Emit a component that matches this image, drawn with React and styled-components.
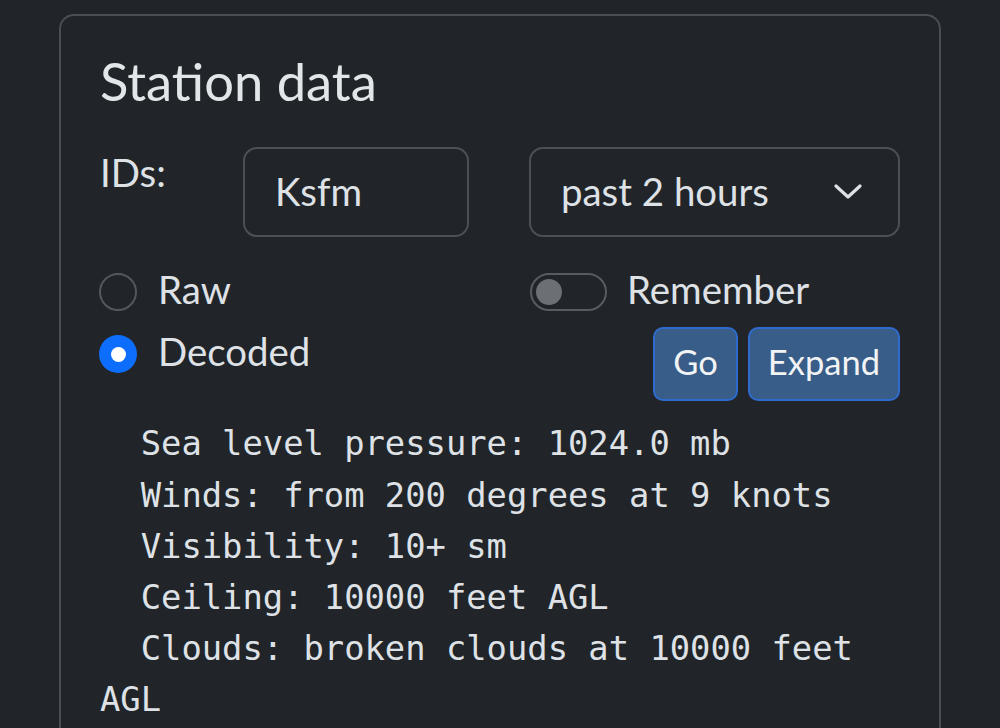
import React from "react";
import styled, { createGlobalStyle } from "styled-components";

const Global = createGlobalStyle`
  html, body { margin: 0; padding: 0; background: #212529; }
  body {
    font-family: Lato, "Noto Sans", sans-serif;
    color: #dee2e6;
    font-size: 38.4px;
    line-height: 1.5;
  }
  * { box-sizing: border-box; }
`;

const Card = styled.section`
  margin: 14px 59px 0 59px;
  border: 2px solid #4a4f55;
  border-radius: 15px;
  padding: 32px 39px 40px 39px;
  min-height: 760px;
`;

const Title = styled.h4`
  margin: 0 0 33px 0;
  font-size: 52.5px;
  font-weight: 400;
  line-height: 66px;
  color: #e3e6e9;
`;

const FieldRow = styled.div`
  display: grid;
  grid-template-columns: 143px 226px 1fr;
  align-items: start;
`;

const Label = styled.label`
  margin-top: -3px;
  line-height: 57.6px;
`;

const Field = styled.div`
  height: 90px;
  border: 2px solid #4b5057;
  border-radius: 14px;
  padding: 0 36px 0 30px;
  display: flex;
  align-items: center;
  justify-content: space-between;
  line-height: 57.6px;
  margin-left: ${(p) => (p.$gap ? "60px" : "0")};
`;

const Options = styled.div`
  margin-top: 24px;
  display: grid;
  grid-template-columns: 1fr 370px;
  align-items: start;
`;

const Stack = styled.div`
  display: flex;
  flex-direction: column;
`;

const Check = styled.div`
  display: flex;
  align-items: flex-start;
  line-height: 57.6px;
  margin-bottom: 4.8px;
  gap: ${(p) => (p.$switch ? "20px" : "21px")};
`;

const Radio = styled.span`
  flex: 0 0 38px;
  width: 38px;
  height: 38px;
  margin-top: 12px;
  margin-left: -1px;
  border-radius: 50%;
  border: ${(p) => (p.$checked ? "none" : "2px solid #53585e")};
  background: ${(p) => (p.$checked ? "#0d6efd" : "transparent")};
  display: flex;
  align-items: center;
  justify-content: center;
  &::after {
    content: "";
    display: ${(p) => (p.$checked ? "block" : "none")};
    width: 15px;
    height: 15px;
    border-radius: 50%;
    background: #fff;
  }
`;

const Switch = styled.span`
  flex: 0 0 77px;
  width: 77px;
  height: 38px;
  margin-top: 12px;
  border: 2px solid #575c62;
  border-radius: 19px;
  display: flex;
  align-items: center;
  padding-left: 4px;
  &::after {
    content: "";
    width: 26px;
    height: 26px;
    border-radius: 50%;
    background: #6c7075;
  }
`;

const Buttons = styled.div`
  display: flex;
  justify-content: flex-end;
  gap: 10px;
  margin-top: 4px;
`;

const Button = styled.button`
  font-family: Lato, "Noto Sans", sans-serif;
  font-size: 34.5px;
  line-height: 51px;
  color: #f1f3f5;
  background: #385d88;
  border: 2px solid #2e6bcc;
  border-radius: 10px;
  padding: 7px 18px 12px 18px;
  cursor: pointer;
`;

const Pre = styled.pre`
  margin: 17px 0 0 0;
  font-family: "DejaVu Sans Mono", "Liberation Mono", monospace;
  font-size: 33.8px;
  line-height: 51.2px;
  white-space: pre-wrap;
  color: #dee2e6;
`;

const Chevron = () => (
  <svg width="28" height="16" viewBox="0 0 28 16" fill="none">
    <path d="M2 2 L14 13 L26 2" stroke="#dee2e6" strokeWidth="3.2" strokeLinecap="round" strokeLinejoin="round" />
  </svg>
);

const decoded = [
  "  Sea level pressure: 1024.0 mb",
  "  Winds: from 200 degrees at 9 knots",
  "  Visibility: 10+ sm",
  "  Ceiling: 10000 feet AGL",
  "  Clouds: broken clouds at 10000 feet AGL",
].join("\n");

export default function App() {
  return (
    <>
      <Global />
      <Card>
        <Title>Station data</Title>
        <FieldRow>
          <Label>IDs:</Label>
          <Field>Ksfm</Field>
          <Field $gap>
            <span>past 2 hours</span>
            <Chevron />
          </Field>
        </FieldRow>
        <Options>
          <Stack>
            <Check>
              <Radio />
              <span>Raw</span>
            </Check>
            <Check>
              <Radio $checked />
              <span>Decoded</span>
            </Check>
          </Stack>
          <Stack>
            <Check $switch>
              <Switch />
              <span>Remember</span>
            </Check>
            <Buttons>
              <Button>Go</Button>
              <Button>Expand</Button>
            </Buttons>
          </Stack>
        </Options>
        <Pre>{decoded}</Pre>
      </Card>
    </>
  );
}
